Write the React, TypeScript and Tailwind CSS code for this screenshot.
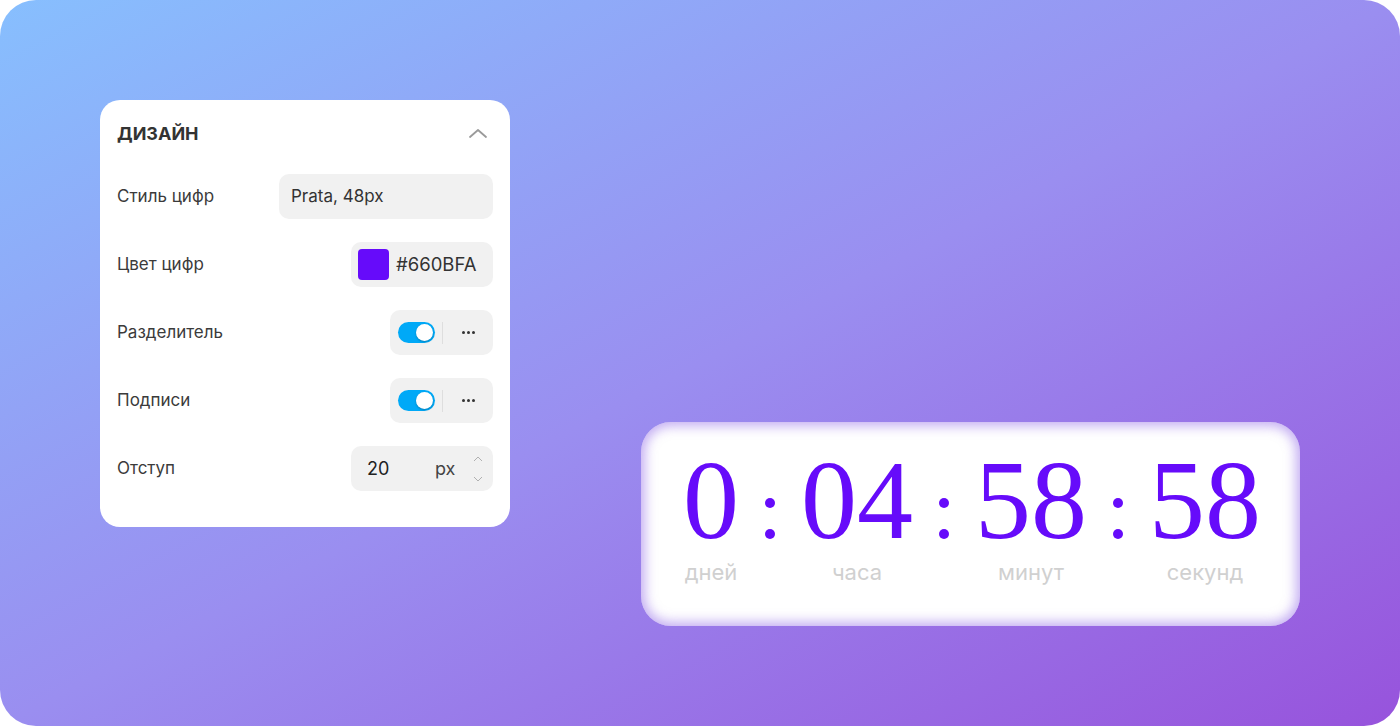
import React from "react";

const Toggle = () => (
  <div className="flex h-[45px] w-[103px] items-center rounded-[10px] bg-[#f1f1f1] pl-[8px]">
    <div className="flex h-[21px] w-[37px] items-center justify-end rounded-full bg-[#00a9f7] pr-[2px]">
      <div className="h-[17px] w-[17px] rounded-full bg-white shadow-[0_1px_2px_rgba(0,0,0,0.25)]" />
    </div>
    <div className="ml-[7px] h-[22px] w-px bg-[#dedede]" />
    <div className="flex flex-1 items-center justify-center gap-[2px]">
      <span className="h-[3px] w-[3px] rounded-full bg-[#333]" />
      <span className="h-[3px] w-[3px] rounded-full bg-[#333]" />
      <span className="h-[3px] w-[3px] rounded-full bg-[#333]" />
    </div>
  </div>
);

const Row = ({ label, children }: { label: string; children: React.ReactNode }) => (
  <div className="flex h-[45px] items-center justify-between">
    <span className="text-[17px] text-[#3b3b3b]">{label}</span>
    {children}
  </div>
);

const Unit = ({ value, label }: { value: string; label: string }) => (
  <div className="flex flex-col items-center">
    <div className="text-[112px] leading-[96px] text-[#660bfa]" style={{ fontFamily: '"Liberation Serif", "DejaVu Serif", serif' }}>
      {value}
    </div>
    <div className="mt-[14px] text-[22px] leading-[20px] text-[#d0d0d0]">{label}</div>
  </div>
);

const Colon = () => (
  <div className="flex w-[10px] flex-col gap-[21px] pt-[46px]">
    <span className="h-[10px] w-[10px] rounded-full bg-[#660bfa]" />
    <span className="h-[10px] w-[10px] rounded-full bg-[#660bfa]" />
  </div>
);

export default function App() {
  return (
    <div className="h-[726px] w-[1400px] bg-white" style={{ fontFamily: "Inter, 'Noto Sans', sans-serif" }}>
      <div className="flex h-full w-full items-start rounded-[36px] bg-[linear-gradient(to_bottom_right,#87bffe,#9a8ef0_50%,#9753dc)] pl-[100px] pt-[100px]">
        <div className="flex w-[410px] flex-col rounded-[20px] bg-white px-[17px] pb-[36px]">
          <div className="flex h-[66px] items-center justify-between">
            <span className="text-[18px] font-bold text-[#333]">ДИЗАЙН</span>
            <svg width="20" height="12" viewBox="0 0 20 12" className="mr-[5px]">
              <polyline points="2,10 10,3 18,10" fill="none" stroke="#9a9a9a" strokeWidth="1.8" strokeLinecap="round" strokeLinejoin="round" />
            </svg>
          </div>
          <div className="mt-[8px] flex flex-col gap-[23px]">
            <Row label="Стиль цифр">
              <div className="flex h-[45px] w-[214px] items-center rounded-[10px] bg-[#f1f1f1] pl-[12px] text-[17px] text-[#333]">
                Prata, 48px
              </div>
            </Row>
            <Row label="Цвет цифр">
              <div className="flex h-[45px] w-[142px] items-center gap-[7px] rounded-[10px] bg-[#f1f1f1] pl-[7px]">
                <div className="h-[31px] w-[31px] rounded-[4px] bg-[#660bfa]" />
                <span className="text-[18.5px] text-[#333]">#660BFA</span>
              </div>
            </Row>
            <Row label="Разделитель">
              <Toggle />
            </Row>
            <Row label="Подписи">
              <Toggle />
            </Row>
            <Row label="Отступ">
              <div className="flex h-[45px] w-[142px] items-center rounded-[10px] bg-[#f1f1f1] pl-[16px]">
                <span className="w-[68px] text-[18px] text-[#222]">20</span>
                <span className="text-[18px] text-[#444]">px</span>
                <div className="ml-auto mr-[10px] flex flex-col gap-[14px]">
                  <svg width="10" height="6" viewBox="0 0 10 6">
                    <polyline points="1,5 5,1 9,5" fill="none" stroke="#b0b0b0" strokeWidth="1" />
                  </svg>
                  <svg width="10" height="6" viewBox="0 0 10 6">
                    <polyline points="1,1 5,5 9,1" fill="none" stroke="#b0b0b0" strokeWidth="1" />
                  </svg>
                </div>
              </div>
            </Row>
          </div>
        </div>
        <div className="ml-[131px] mt-[322px] flex h-[204px] w-[659px] items-start gap-[26px] rounded-[30px] bg-white pl-[42px] pt-[30px] shadow-[inset_0_0_12px_4px_rgba(145,105,232,0.55)]">
          <Unit value="0" label="дней" />
          <Colon />
          <Unit value="04" label="часа" />
          <Colon />
          <Unit value="58" label="минут" />
          <Colon />
          <Unit value="58" label="секунд" />
        </div>
      </div>
    </div>
  );
}
